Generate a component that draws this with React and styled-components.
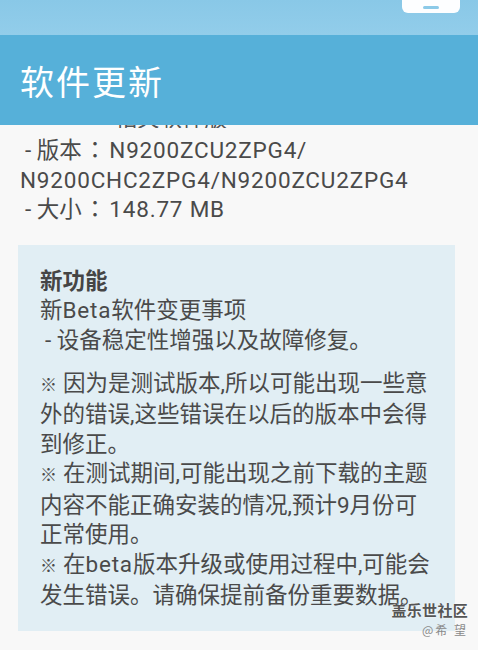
import styled, { createGlobalStyle } from "styled-components";

const GlobalStyle = createGlobalStyle`
  html, body {
    margin: 0;
    padding: 0;
    background: #f8f8f8;
  }
  body {
    width: 478px;
    height: 650px;
    overflow: hidden;
    font-family: Roboto, "Noto Sans CJK SC", sans-serif;
  }
`;

const Screen = styled.div`
  position: relative;
  width: 478px;
  height: 650px;
  display: flex;
  flex-direction: column;
  background: #f8f8f8;
  overflow: hidden;
`;

const StatusBar = styled.div`
  height: 35px;
  flex-shrink: 0;
  display: flex;
  justify-content: flex-end;
  align-items: flex-start;
  padding-right: 18px;
  background: linear-gradient(180deg, #89c8e7 0%, #92cdea 100%);
`;

const TrayTab = styled.div`
  width: 58px;
  height: 13px;
  background: #fdfeff;
  border-radius: 0 0 6px 6px;
  display: flex;
  justify-content: center;
  align-items: flex-end;
  padding-bottom: 4px;
  box-sizing: border-box;
`;

const TrayPill = styled.div`
  width: 16px;
  height: 3px;
  border-radius: 2px;
  background: #8ccae8;
`;

const Header = styled.header`
  height: 90px;
  flex-shrink: 0;
  display: flex;
  align-items: center;
  padding-left: 20px;
  background: #56b0d9;
`;

const Title = styled.h1`
  margin: 0;
  font-family: "Noto Sans CJK SC", sans-serif;
  font-weight: 400;
  font-size: 34px;
  letter-spacing: 2px;
  color: #ffffff;
`;

const Content = styled.main`
  flex: 1;
  min-height: 0;
  padding: 0 23px 0 18px;
  color: #4a4a4a;
  font-size: 22.5px;
  line-height: 29.5px;
`;

/* the line that has scrolled up under the header: only its foot shows */
const ClippedLine = styled.div`
  height: 3px;
  overflow: hidden;
  display: flex;
  align-items: flex-end;
  gap: 72px;
  padding-left: 2px;
`;

const ClippedText = styled.span`
  white-space: pre;
  line-height: 20px;
  color: #555555;
`;

const InfoList = styled.div`
  margin-top: 8px;
  padding-left: 2px;
`;

const Line = styled.div`
  white-space: nowrap;
  padding-left: ${(p) => (p.$indent ? "5px" : "0")};
`;

const Latin = styled.span`
  letter-spacing: 0.8px;
`;

const Colon = styled.span`
  font-family: "Noto Sans CJK TC", sans-serif;
  line-height: 0;
  margin-left: 2px;
  margin-right: 3px;
`;

const NoteBox = styled.section`
  margin-top: 20px;
  padding: 22px 22px 20px 22px;
  background: #e1eef4;
`;

const NoteTitle = styled.div`
  font-weight: 700;
  color: #454545;
`;

const Paragraph = styled.div`
  margin-top: ${(p) => (p.$gap ? "13.5px" : "0")};
`;

const Mark = styled.span`
  font-size: 17px;
  margin-right: 6px;
`;

const Watermark = styled.div`
  position: absolute;
  right: 10px;
  top: 602px;
  display: flex;
  flex-direction: column;
  align-items: flex-end;
  font-family: "Noto Sans CJK SC", sans-serif;
  line-height: 1;
`;

const WatermarkBrand = styled.span`
  font-size: 15px;
  font-weight: 700;
  letter-spacing: 0.3px;
  color: #555555;
  text-shadow: 0 0 2px #ffffff;
`;

const WatermarkUser = styled.span`
  margin-top: 7px;
  font-size: 12px;
  color: #8a8a8a;
  letter-spacing: 2px;
`;

export default function App() {
  return (
    <Screen>
      <GlobalStyle />
      <StatusBar>
        <TrayTab>
          <TrayPill />
        </TrayTab>
      </StatusBar>
      <Header>
        <Title>软件更新</Title>
      </Header>
      <Content>
        <ClippedLine>
          <ClippedText>一</ClippedText>
          <ClippedText>相关软件版</ClippedText>
        </ClippedLine>
        <InfoList>
          <Line $indent>
            - 版本<Colon>：</Colon>
            <Latin>N9200ZCU2ZPG4/</Latin>
          </Line>
          <Line>
            <Latin>N9200CHC2ZPG4/N9200ZCU2ZPG4</Latin>
          </Line>
          <Line $indent>
            - 大小<Colon>：</Colon>
            <Latin>148.77 MB</Latin>
          </Line>
        </InfoList>
        <NoteBox>
          <NoteTitle>新功能</NoteTitle>
          <Paragraph>
            <Line>
              新<Latin>Beta</Latin>软件变更事项
            </Line>
            <Line $indent>- 设备稳定性增强以及故障修复。</Line>
          </Paragraph>
          <Paragraph $gap>
            <Line>
              <Mark>※</Mark>因为是测试版本,所以可能出现一些意
            </Line>
            <Line>外的错误,这些错误在以后的版本中会得</Line>
            <Line>到修正。</Line>
            <Line>
              <Mark>※</Mark>在测试期间,可能出现之前下载的主题
            </Line>
            <Line>内容不能正确安装的情况,预计9月份可</Line>
            <Line>正常使用。</Line>
            <Line>
              <Mark>※</Mark>在<Latin>beta</Latin>版本升级或使用过程中,可能会
            </Line>
            <Line>发生错误。请确保提前备份重要数据。</Line>
          </Paragraph>
        </NoteBox>
      </Content>
      <Watermark>
        <WatermarkBrand>盖乐世社区</WatermarkBrand>
        <WatermarkUser>@希 望</WatermarkUser>
      </Watermark>
    </Screen>
  );
}
